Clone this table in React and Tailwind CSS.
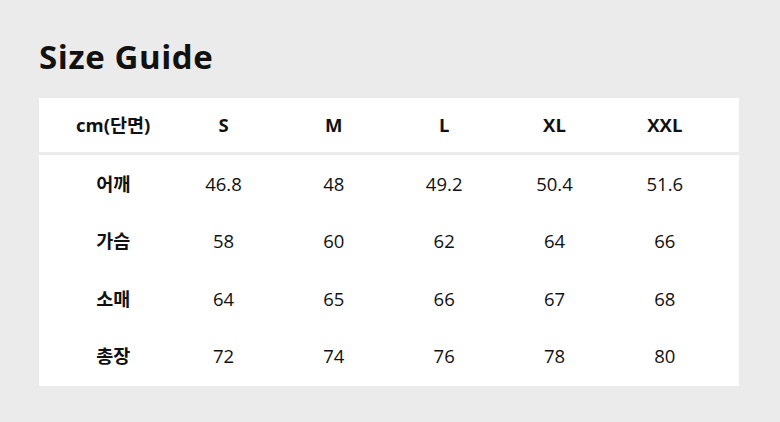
const sizes = ['S', 'M', 'L', 'XL', 'XXL'];

const rows = [
  { label: '어깨', values: ['46.8', '48', '49.2', '50.4', '51.6'] },
  { label: '가슴', values: ['58', '60', '62', '64', '66'] },
  { label: '소매', values: ['64', '65', '66', '67', '68'] },
  { label: '총장', values: ['72', '74', '76', '78', '80'] },
];

export default function App() {
  return (
    <div
      className="h-[422px] w-[780px] bg-[#ebebeb] px-[39px] pt-[37px] text-[#111]"
      style={{ fontFamily: '"Open Sans", "Noto Sans CJK KR", sans-serif' }}
    >
      <h1 className="text-[33px] font-bold leading-[40px] tracking-[0.6px]">Size Guide</h1>
      <div className="mt-[21px] w-[700px] bg-white px-[19px]">
        <div className="grid h-[54px] grid-cols-6 items-center text-[18.5px] font-bold">
          <div className="text-center">cm(단면)</div>
          {sizes.map((s) => (
            <div key={s} className="text-center">{s}</div>
          ))}
        </div>
        <div className="-mx-[19px] h-[3px] bg-[#ebebeb]" />
        <div className="pb-[1px]">
          {rows.map((r) => (
            <div key={r.label} className="grid h-[57.5px] grid-cols-6 items-center text-[18.5px]">
              <div className="text-center font-bold">{r.label}</div>
              {r.values.map((v, i) => (
                <div key={i} className="text-center">{v}</div>
              ))}
            </div>
          ))}
        </div>
      </div>
    </div>
  );
}
